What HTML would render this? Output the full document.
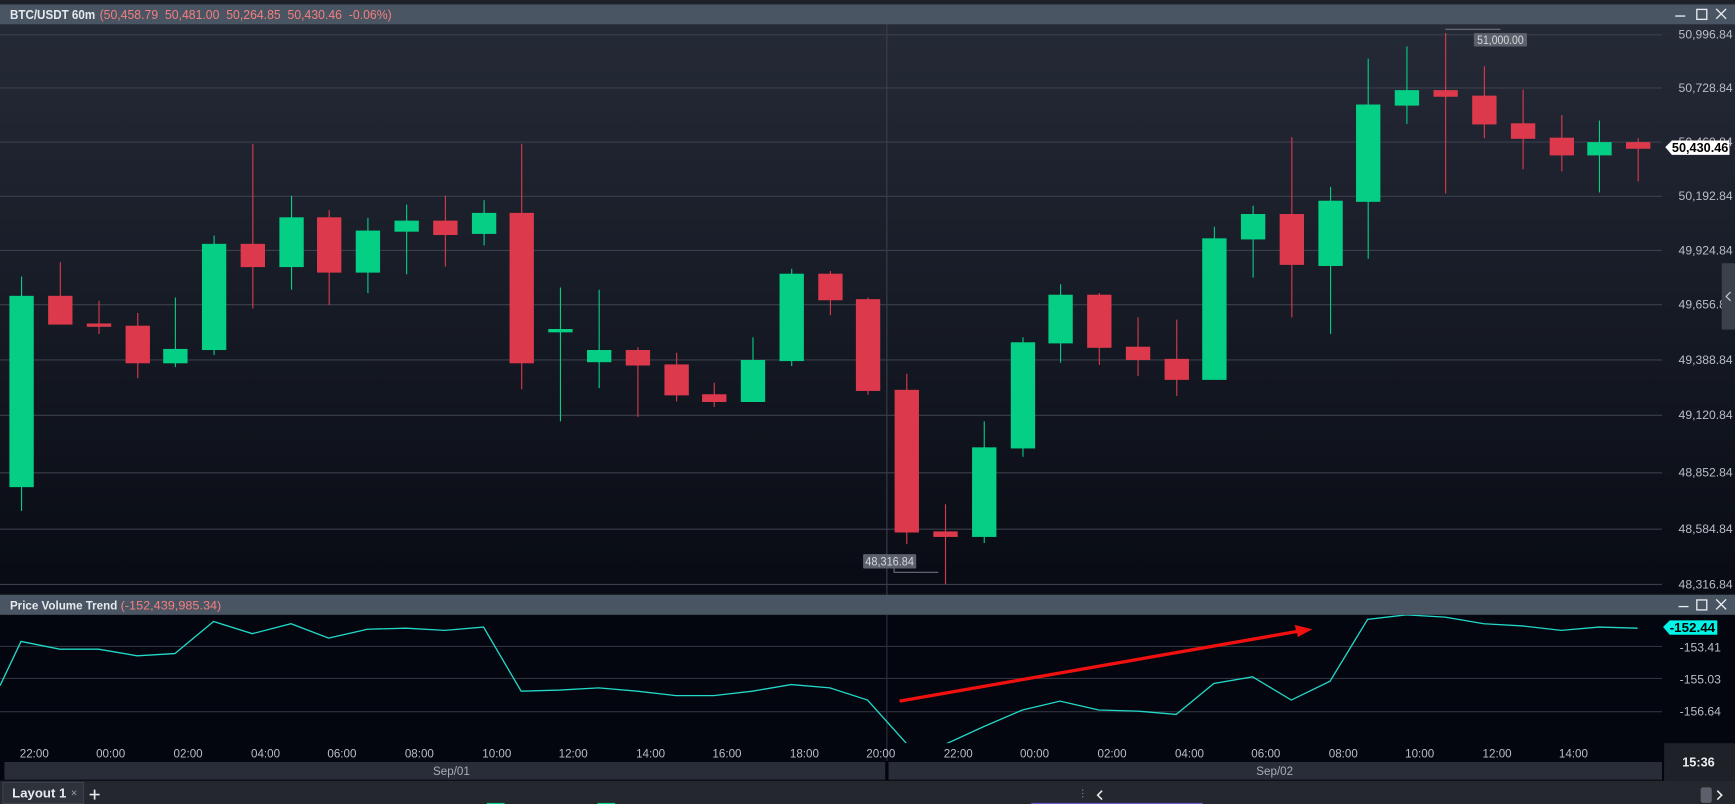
<!DOCTYPE html>
<html><head><meta charset="utf-8"><style>
html,body{margin:0;padding:0;background:#1e2228;overflow:hidden}
svg{display:block}
text{font-family:"Liberation Sans",sans-serif}
</style></head><body>
<svg width="1735" height="804" viewBox="0 0 1568 727" preserveAspectRatio="none" xmlns="http://www.w3.org/2000/svg">
<defs>
<linearGradient id="bg" x1="0" y1="0" x2="0" y2="1">
<stop offset="0" stop-color="#252a37"/><stop offset="1" stop-color="#080b13"/>
</linearGradient>
<clipPath id="ic"><rect x="0" y="556" width="1502" height="116"/></clipPath>
</defs>
<rect x="0" y="0" width="1568" height="727" fill="#1e2228"/>
<rect x="0" y="22" width="1568" height="515" fill="url(#bg)"/>
<rect x="0" y="4" width="1568" height="18" fill="#4a5563"/>
<text x="9" y="17" font-size="11.5" fill="#e6e9ee" font-weight="bold" textLength="77" lengthAdjust="spacingAndGlyphs">BTC/USDT 60m</text>
<text x="90" y="17" font-size="11.5" fill="#f47f7f" textLength="264" lengthAdjust="spacingAndGlyphs" xml:space="preserve">(50,458.79  50,481.00  50,264.85  50,430.46  -0.06%)</text>
<g stroke="#e8ebef" stroke-width="1.2" fill="none">
<line x1="1514" y1="14.5" x2="1523" y2="14.5"/><rect x="1533.5" y="8.5" width="9" height="9"/>
<path d="M1551 8 L1560 17 M1560 8 L1551 17"/>
</g>
<g stroke="#3a3f4b" stroke-width="1">
<line x1="0" y1="31.5" x2="1502" y2="31.5"/><line x1="0" y1="79.5" x2="1502" y2="79.5"/>
<line x1="0" y1="128.5" x2="1502" y2="128.5"/><line x1="0" y1="177.5" x2="1502" y2="177.5"/>
<line x1="0" y1="226.5" x2="1502" y2="226.5"/><line x1="0" y1="275.5" x2="1502" y2="275.5"/>
<line x1="0" y1="325.5" x2="1502" y2="325.5"/><line x1="0" y1="375.5" x2="1502" y2="375.5"/>
<line x1="0" y1="427.5" x2="1502" y2="427.5"/><line x1="0" y1="478.5" x2="1502" y2="478.5"/>
<line x1="0" y1="528.5" x2="1502" y2="528.5"/>
<line x1="801.5" y1="22" x2="801.5" y2="688"/>
</g>
<g font-size="11" fill="#b9bec7">
<text x="1517" y="35">50,996.84</text><text x="1517" y="83">50,728.84</text>
<text x="1517" y="132">50,460.84</text><text x="1517" y="181">50,192.84</text>
<text x="1517" y="230">49,924.84</text><text x="1517" y="279">49,656.84</text>
<text x="1517" y="329">49,388.84</text><text x="1517" y="379">49,120.84</text>
<text x="1517" y="431">48,852.84</text><text x="1517" y="482">48,584.84</text>
<text x="1517" y="532">48,316.84</text>
</g>
<rect x="1556" y="238" width="12" height="60" fill="#3b404a"/>
<path d="M1564 264 L1560 268 L1564 272" stroke="#d0d3d8" fill="none"/>
<g stroke-width="1">
<g fill="#05cf85" stroke="#05cf85">
<line x1="19.5" y1="250" x2="19.5" y2="462"/><rect x="9" y="268" width="21" height="172"/>
<line x1="158.5" y1="269" x2="158.5" y2="332"/><rect x="148" y="316" width="21" height="12"/>
<line x1="193.5" y1="213" x2="193.5" y2="321"/><rect x="183" y="221" width="21" height="95"/>
<line x1="263.5" y1="177" x2="263.5" y2="262"/><rect x="253" y="197" width="21" height="44"/>
<line x1="332.5" y1="197" x2="332.5" y2="265"/><rect x="322" y="209" width="21" height="37"/>
<line x1="367.5" y1="185" x2="367.5" y2="248"/><rect x="357" y="200" width="21" height="9"/>
<line x1="437.5" y1="181" x2="437.5" y2="222"/><rect x="427" y="193" width="21" height="18"/>
<line x1="506.5" y1="260" x2="506.5" y2="381"/><rect x="496" y="298" width="21" height="2"/>
<line x1="541.5" y1="262" x2="541.5" y2="351"/><rect x="531" y="317" width="21" height="10"/>
<line x1="680.5" y1="305" x2="680.5" y2="363"/><rect x="670" y="326" width="21" height="37"/>
<line x1="715.5" y1="243" x2="715.5" y2="331"/><rect x="705" y="248" width="21" height="78"/>
<line x1="889.5" y1="381" x2="889.5" y2="491"/><rect x="879" y="405" width="21" height="80"/>
<line x1="924.5" y1="305" x2="924.5" y2="413"/><rect x="914" y="310" width="21" height="95"/>
<line x1="958.5" y1="257" x2="958.5" y2="328"/><rect x="948" y="267" width="21" height="43"/>
<line x1="1097.5" y1="205" x2="1097.5" y2="343"/><rect x="1087" y="216" width="21" height="127"/>
<line x1="1132.5" y1="186" x2="1132.5" y2="251"/><rect x="1122" y="194" width="21" height="22"/>
<line x1="1202.5" y1="169" x2="1202.5" y2="302"/><rect x="1192" y="182" width="21" height="58"/>
<line x1="1236.5" y1="53" x2="1236.5" y2="234"/><rect x="1226" y="95" width="21" height="87"/>
<line x1="1271.5" y1="42" x2="1271.5" y2="112"/><rect x="1261" y="82" width="21" height="13"/>
<line x1="1445.5" y1="109" x2="1445.5" y2="174"/><rect x="1435" y="129" width="21" height="11"/>
</g>
<g fill="#dc3a4c" stroke="#dc3a4c">
<line x1="54.5" y1="237" x2="54.5" y2="293"/><rect x="44" y="268" width="21" height="25"/>
<line x1="89.5" y1="272" x2="89.5" y2="302"/><rect x="79" y="293" width="21" height="2"/>
<line x1="124.5" y1="283" x2="124.5" y2="342"/><rect x="114" y="295" width="21" height="33"/>
<line x1="228.5" y1="130" x2="228.5" y2="279"/><rect x="218" y="221" width="21" height="20"/>
<line x1="297.5" y1="190" x2="297.5" y2="276"/><rect x="287" y="197" width="21" height="49"/>
<line x1="402.5" y1="177" x2="402.5" y2="241"/><rect x="392" y="200" width="21" height="12"/>
<line x1="471.5" y1="130" x2="471.5" y2="352"/><rect x="461" y="193" width="21" height="135"/>
<line x1="576.5" y1="314" x2="576.5" y2="377"/><rect x="566" y="317" width="21" height="13"/>
<line x1="611.5" y1="319" x2="611.5" y2="363"/><rect x="601" y="330" width="21" height="27"/>
<line x1="645.5" y1="346" x2="645.5" y2="368"/><rect x="635" y="357" width="21" height="6"/>
<line x1="750.5" y1="245" x2="750.5" y2="285"/><rect x="740" y="248" width="21" height="23"/>
<line x1="784.5" y1="269" x2="784.5" y2="357"/><rect x="774" y="271" width="21" height="82"/>
<line x1="819.5" y1="338" x2="819.5" y2="492"/><rect x="809" y="353" width="21" height="128"/>
<line x1="854.5" y1="456" x2="854.5" y2="528"/><rect x="844" y="481" width="21" height="4"/>
<line x1="993.5" y1="265" x2="993.5" y2="330"/><rect x="983" y="267" width="21" height="47"/>
<line x1="1028.5" y1="287" x2="1028.5" y2="340"/><rect x="1018" y="314" width="21" height="11"/>
<line x1="1063.5" y1="289" x2="1063.5" y2="358"/><rect x="1053" y="325" width="21" height="18"/>
<line x1="1167.5" y1="124" x2="1167.5" y2="287"/><rect x="1157" y="194" width="21" height="45"/>
<line x1="1306.5" y1="30" x2="1306.5" y2="175"/><rect x="1296" y="82" width="21" height="5"/>
<line x1="1341.5" y1="60" x2="1341.5" y2="125"/><rect x="1331" y="87" width="21" height="25"/>
<line x1="1376.5" y1="81" x2="1376.5" y2="153"/><rect x="1366" y="112" width="21" height="13"/>
<line x1="1411.5" y1="104" x2="1411.5" y2="155"/><rect x="1401" y="125" width="21" height="15"/>
<line x1="1480.5" y1="125" x2="1480.5" y2="164"/><rect x="1470" y="129" width="21" height="5"/>
</g>
</g>
<line x1="1306" y1="26.5" x2="1356" y2="26.5" stroke="#6b707a"/>
<rect x="1332" y="30" width="48" height="12" rx="1" fill="#5b606a"/>
<text x="1335" y="40" font-size="10.5" fill="#d5d8dd" textLength="42" lengthAdjust="spacingAndGlyphs">51,000.00</text>
<path d="M808 514 V517.5 H848" stroke="#6b707a" fill="none"/>
<rect x="780" y="501" width="48" height="13" rx="1" fill="#5b606a"/>
<text x="782" y="511.5" font-size="10.5" fill="#d5d8dd" textLength="44" lengthAdjust="spacingAndGlyphs">48,316.84</text>
<path d="M1505 133 L1511 127 H1563 V140 H1511 Z" fill="#ffffff"/>
<text x="1511" y="137.5" font-size="11.5" font-weight="bold" fill="#000" textLength="51" lengthAdjust="spacingAndGlyphs">50,430.46</text>
<rect x="0" y="538" width="1568" height="18" fill="#4a5563"/>
<text x="9" y="551" font-size="11" fill="#e6e9ee" font-weight="bold" textLength="97" lengthAdjust="spacingAndGlyphs">Price Volume Trend</text>
<text x="109" y="551" font-size="11" fill="#f47f7f" textLength="91" lengthAdjust="spacingAndGlyphs">(-152,439,985.34)</text>
<g stroke="#e8ebef" stroke-width="1.2" fill="none">
<line x1="1517" y1="548.5" x2="1526" y2="548.5"/><rect x="1533.5" y="542.5" width="9" height="9"/>
<path d="M1551 542 L1560 551 M1560 542 L1551 551"/>
</g>
<rect x="0" y="556" width="1568" height="132" fill="#03060e"/>
<g stroke="#2e333e"><line x1="0" y1="584.5" x2="1502" y2="584.5"/><line x1="0" y1="613.5" x2="1502" y2="613.5"/><line x1="0" y1="643.5" x2="1502" y2="643.5"/><line x1="801.5" y1="556" x2="801.5" y2="688"/></g>
<g font-size="11" fill="#b9bec7"><text x="1518" y="589">-153.41</text><text x="1518" y="618">-155.03</text><text x="1518" y="647">-156.64</text></g>
<g clip-path="url(#ic)" fill="none" stroke="#22d8c8" stroke-width="1.2">
<polyline points="0,620 19,580 54,587 89,587 124,593 158,591 193,562 228,573 263,564 297,577 332,569 367,568 402,570 437,567 471,625 506,624 541,622 576,625 611,629 645,629 680,625 715,619 750,622 784,633 819,672"/>
<polyline points="852,674 889,657 924,642 958,634 993,642 1028,643 1063,646 1097,618 1132,612 1167,633 1202,616 1236,560 1271,556 1306,558 1341,564 1376,566 1411,570 1445,567 1480,568"/>
</g>
<line x1="813" y1="634" x2="1172" y2="571" stroke="#f01010" stroke-width="3"/>
<path d="M1186 569 L1170 565 L1173 576 Z" fill="#f01010"/>
<path d="M1503 567 L1509 561 H1552 V574 H1509 Z" fill="#00f5e8"/>
<text x="1509" y="571.5" font-size="11.5" font-weight="bold" fill="#000" textLength="41" lengthAdjust="spacingAndGlyphs">-152.44</text>
<g font-size="10.5" fill="#b9bec7" text-anchor="middle">
<text x="31" y="685">22:00</text><text x="100" y="685">00:00</text><text x="170" y="685">02:00</text>
<text x="240" y="685">04:00</text><text x="309" y="685">06:00</text><text x="379" y="685">08:00</text>
<text x="449" y="685">10:00</text><text x="518" y="685">12:00</text><text x="588" y="685">14:00</text>
<text x="657" y="685">16:00</text><text x="727" y="685">18:00</text><text x="796" y="685">20:00</text>
<text x="866" y="685">22:00</text><text x="935" y="685">00:00</text><text x="1005" y="685">02:00</text>
<text x="1075" y="685">04:00</text><text x="1144" y="685">06:00</text><text x="1214" y="685">08:00</text>
<text x="1283" y="685">10:00</text><text x="1353" y="685">12:00</text><text x="1422" y="685">14:00</text>
</g>
<rect x="0" y="688" width="1504" height="18" fill="#03060e"/>
<rect x="4" y="689" width="796" height="16" fill="#292d38"/>
<rect x="803" y="689" width="699" height="16" fill="#292d38"/>
<g font-size="10.5" fill="#a8adb6" text-anchor="middle"><text x="408" y="701">Sep/01</text><text x="1152" y="701">Sep/02</text></g>
<rect x="1504" y="672" width="64" height="34" fill="#1e2228"/>
<text x="1535" y="693" font-size="11.5" font-weight="bold" fill="#e8ebef" text-anchor="middle">15:36</text>
<rect x="0" y="706" width="1568" height="21" fill="#24272e"/>
<rect x="2.5" y="707.5" width="73" height="19" fill="#2e323b" stroke="#3c414b"/>
<text x="11" y="721" font-size="11.5" font-weight="bold" fill="#e8ebef" textLength="49" lengthAdjust="spacingAndGlyphs">Layout 1</text>
<text x="64" y="720" font-size="10" fill="#9aa0a8">×</text>
<path d="M85.5 714 V723 M81 718.5 H90" stroke="#e8ebef" stroke-width="1.5"/>
<path d="M978.5 714 V723" stroke="#8a8f98" stroke-dasharray="1,2"/>
<path d="M996 715 L992 719 L996 723" stroke="#e8ebef" stroke-width="1.4" fill="none"/>
<rect x="1537" y="712" width="10" height="14" rx="2" fill="#5b606a"/>
<path d="M1552 715 L1556 719 L1552 723" stroke="#e8ebef" stroke-width="1.4" fill="none"/>
<rect x="440" y="726" width="16" height="1" fill="#05cf85"/><rect x="540" y="726" width="16" height="1" fill="#05cf85"/>
<rect x="932" y="726" width="155" height="1" fill="#6a5acd"/>
</svg>
</body></html>
